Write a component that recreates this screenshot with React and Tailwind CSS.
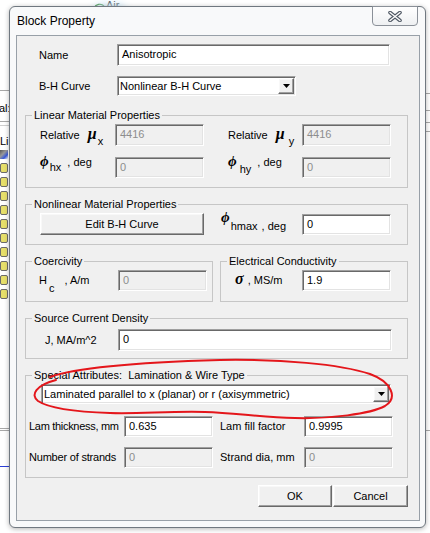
import React from 'react';

const ui = "font-['Liberation_Sans',Arial,sans-serif]";
const greek = "font-['Liberation_Serif','DejaVu_Serif',serif] font-bold italic leading-[0]";

// classic 3D edges
const sunken =
  'border border-t-[#a0a0a0] border-l-[#a0a0a0] border-r-white border-b-white shadow-[inset_1px_1px_0_#696969,inset_-1px_-1px_0_#e3e3e3]';
const raised =
  'border border-t-white border-l-white border-r-[#696969] border-b-[#696969] shadow-[inset_-1px_-1px_0_#a0a0a0,inset_1px_1px_0_#f8f8f8]';

function Field({ value, disabled, className }) {
  return (
    <div
      className={`${className} ${sunken} ${
        disabled ? 'bg-[#f0f0f0] text-[#8d8d8d]' : 'bg-white text-black'
      } pl-[4px] pt-[3px] text-[11px] leading-[13px]`}
    >
      {value}
    </div>
  );
}

function Combo({ value, className }) {
  return (
    <div className={`${className} ${sunken} bg-white flex items-center`}>
      <span className="flex-1 pl-[2px] text-[11px] leading-[13px] whitespace-nowrap">{value}</span>
      <div className={`w-[16px] h-[16px] mr-px ${raised} bg-[#f0f0f0] flex items-center justify-center`}>
        <svg width="7" height="4" viewBox="0 0 7 4">
          <path d="M0 0h7L3.5 4z" fill="#000" />
        </svg>
      </div>
    </div>
  );
}

function Button({ label, className }) {
  return (
    <div
      className={`${className} ${raised} bg-[#f0f0f0] flex items-center justify-center text-[11px] leading-[13px]`}
    >
      {label}
    </div>
  );
}

function Group({ title, className, children }) {
  return (
    <div className={`relative border border-[#c6c6c6] ${className}`}>
      <span className="absolute left-[6px] top-[-8px] bg-[#f0f0f0] px-[2px] text-[11px] leading-[14px] whitespace-pre">
        {title}
      </span>
      {children}
    </div>
  );
}

function Label({ className, children }) {
  return <div className={`${className} shrink-0 text-[11px] leading-[13px] whitespace-nowrap`}>{children}</div>;
}

function TreeIcon() {
  return <div className="w-[8px] h-[10px] rounded-[2px] border border-[#6b6b6b] bg-[#e6df6a]" />;
}

export default function App() {
  return (
    <div className={`${ui} relative w-[430px] h-[533px] overflow-hidden bg-white text-black`}>
      {/* desktop behind the dialog */}
      <div className="absolute left-[93px] top-[-3px] flex items-center gap-px text-[11px] text-[#333]">
        <svg width="12" height="8" viewBox="0 0 12 8">
          <path d="M1 7C3 3 8 2 11 5" stroke="#2f8a2f" strokeWidth="1.2" fill="none" />
        </svg>
        <span>Air</span>
      </div>
      <div className="absolute left-[95px] top-[4px] w-[30px] h-[12px] rounded-full bg-[#cfe8f5] blur-[4px]" />

      <div className="absolute left-0 top-[90px] w-[9px] flex flex-col text-[11px]">
        <div className="h-px bg-[#a8a8a8]" />
        <div className="mt-[11px] leading-[13px] -ml-px">al:</div>
        <div className="mt-[6px] h-px bg-[#a8a8a8]" />
        <div className="mt-[3px] h-px bg-[#cfcfcf]" />
        <div className="mt-[9px] leading-[12px]">Li</div>
        <div className="mt-[3px] w-[8px] h-[9px] bg-[linear-gradient(135deg,#555_0%,#999_40%,#3a5bd9_70%,#fff_100%)]" />
        <div className="mt-[4px] flex flex-col gap-[4px]">
          {Array.from({ length: 10 }).map((_, i) => (
            <TreeIcon key={i} />
          ))}
        </div>
      </div>
      <div className="absolute left-0 top-[428px] w-[9px] h-[3px] border-y border-[#a8a8a8]" />
      <div className="absolute left-0 top-[466px] w-[9px] h-px bg-[#2b3fd6]" />

      <div className="absolute left-[426px] top-[93px] w-[4px] h-px bg-[#a8a8a8]" />
      <div className="absolute left-[426px] top-[110px] w-[4px] h-px bg-[#a8a8a8]" />
      <div className="absolute left-[426px] top-[122px] w-[4px] h-px bg-[#a8a8a8]" />
      <div className="absolute left-[426px] top-[131px] w-[4px] h-px bg-[#a8a8a8]" />
      <div className="absolute left-[426px] top-[430px] w-[4px] h-px bg-[#a8a8a8]" />

      {/* Block Property dialog */}
      <div className="absolute left-[9px] top-[6px] w-[417px] h-[522px] rounded-[6px] border border-[#707880] bg-[#f8f9fa] shadow-[0_1px_5px_rgba(0,0,0,0.3)]">
        <div className="flex h-[28px]">
          <div className="pl-[7px] pt-[7px] text-[12px] leading-[14px]">Block Property</div>
          <div className="ml-auto mr-[7px] -mt-px w-[46px] h-[20px] rounded-b-[4px] border border-[#8a9098] bg-[linear-gradient(#ffffff,#eef0f2)] flex items-center justify-center">
            <svg width="16" height="11" viewBox="0 0 16 11">
              <path d="M3 1.5L13 9.5M13 1.5L3 9.5" stroke="#4f5864" strokeWidth="3.6" strokeLinecap="round" />
              <path d="M3 1.5L13 9.5M13 1.5L3 9.5" stroke="#fdfdfd" strokeWidth="1.4" strokeLinecap="round" />
            </svg>
          </div>
        </div>

        <div className="ml-[6px] w-[404px] h-[486px] border border-[#98a0a8] bg-[#f0f0f0] pt-[8px]">
          <div className="flex items-center">
            <Label className="w-[100px] pl-[22px]">Name</Label>
            <Field className="w-[273px] h-[22px]" value="Anisotropic" />
          </div>
          <div className="mt-[10px] flex items-center">
            <Label className="w-[100px] pl-[22px]">B-H Curve</Label>
            <Combo className="w-[179px] h-[20px]" value="Nonlinear B-H Curve" />
          </div>

          <Group title="Linear Material Properties" className="mt-[19px] ml-[8px] w-[383px] h-[73px] pt-[8px] pl-[14px]">
            <div className="flex items-center">
              <Label className="w-[75px]">
                Relative<span className={`${greek} ml-[8px] text-[16px]`}>μ</span>
                <span className="leading-[0] align-[-6px] ml-px">x</span>
              </Label>
              <Field className="w-[89px] h-[22px]" value="4416" disabled />
              <Label className="ml-[24px] w-[74px]">
                Relative<span className={`${greek} ml-[8px] text-[16px]`}>μ</span>
                <span className="leading-[0] align-[-6px] ml-[4px]">y</span>
              </Label>
              <Field className="w-[89px] h-[22px]" value="4416" disabled />
            </div>
            <div className="mt-[11px] flex items-center">
              <Label className="w-[75px]">
                <span className={`${greek} text-[15px] align-[5px]`}>ϕ</span>
                <span className="ml-px">hx</span>
                <span className="ml-[6px] leading-[0] align-[5px]">, deg</span>
              </Label>
              <Field className="w-[89px] h-[21px]" value="0" disabled />
              <Label className="ml-[24px] w-[74px]">
                <span className={`${greek} text-[15px] align-[5px]`}>ϕ</span>
                <span className="ml-[3px] leading-[0] align-[-2px]">hy</span>
                <span className="ml-[6px] leading-[0] align-[5px]">, deg</span>
              </Label>
              <Field className="w-[89px] h-[21px]" value="0" disabled />
            </div>
          </Group>

          <Group title="Nonlinear Material Properties" className="mt-[16px] ml-[8px] w-[383px] h-[41px] pt-[8px] pl-[14px]">
            <div className="flex items-center">
              <Button className="w-[164px] h-[22px]" label="Edit B-H Curve" />
              <Label className="ml-[17px] w-[81px]">
                <span className={`${greek} text-[15px] align-[6px]`}>ϕ</span>
                <span className="ml-px align-[-2px] leading-[0]">hmax</span>
                <span className="ml-[4px] align-[-2px] leading-[0]">, deg</span>
              </Label>
              <Field className="w-[89px] h-[21px]" value="0" />
            </div>
          </Group>

          <div className="mt-[16px] ml-[8px] flex gap-[7px]">
            <Group title="Coercivity" className="w-[188px] h-[41px] pt-[8px] pl-[13px]">
              <div className="flex items-center">
                <Label className="w-[79px]">
                  H<span className="ml-[2px] leading-[0] align-[-8px]">c</span>
                  <span className="ml-[10px]">, A/m</span>
                </Label>
                <Field className="w-[89px] h-[21px]" value="0" disabled />
              </div>
            </Group>
            <Group title="Electrical Conductivity" className="w-[188px] h-[41px] pt-[8px] pl-[14px]">
              <div className="flex items-center">
                <Label className="w-[67px]">
                  <span className={`${greek} text-[16px]`}>σ</span>
                  <span className="ml-[4px]">, MS/m</span>
                </Label>
                <Field className="w-[89px] h-[21px]" value="1.9" />
              </div>
            </Group>
          </div>

          <Group title="Source Current Density" className="mt-[16px] ml-[8px] w-[383px] h-[41px] pt-[10px] pl-[19px]">
            <div className="flex items-center">
              <Label className="w-[73px]">J, MA/m^2</Label>
              <Field className="w-[274px] h-[22px]" value="0" />
            </div>
          </Group>

          <Group
            title="Special Attributes:  Lamination & Wire Type"
            className="mt-[16px] ml-[8px] w-[383px] h-[103px] pt-[8px]"
          >
            <div className="pl-[15px]">
              <Combo className="w-[350px] h-[20px]" value="Laminated parallel to x (planar) or r (axisymmetric)" />
            </div>
            <div className="mt-[12px] pl-[3px] flex items-center">
              <Label className="w-[95px] tracking-[-0.3px]">Lam thickness, mm</Label>
              <Field className="w-[89px] h-[21px]" value="0.635" />
              <Label className="ml-[7px] w-[84px]">Lam fill factor</Label>
              <Field className="w-[89px] h-[21px]" value="0.9995" />
            </div>
            <div className="mt-[10px] pl-[3px] flex items-center">
              <Label className="w-[95px] tracking-[-0.2px]">Number of strands</Label>
              <Field className="w-[89px] h-[21px]" value="0" disabled />
              <Label className="ml-[7px] w-[84px]">Strand dia, mm</Label>
              <Field className="w-[89px] h-[21px]" value="0" disabled />
            </div>
          </Group>

          <div className="mt-[7px] pr-[11px] flex justify-end gap-px">
            <Button className="w-[74px] h-[22px]" label="OK" />
            <Button className="w-[75px] h-[22px]" label="Cancel" />
          </div>
        </div>
      </div>

      {/* red pen mark around the lamination combo */}
      <svg className="absolute left-0 top-0 pointer-events-none" width="430" height="533" viewBox="0 0 430 533">
        <path
          d="M50 377C80 366 150 362 220 360C280 359 340 364 370 374C392 382 398 398 385 406C370 414 330 419 295 418C260 417 235 413 205 412C170 411 140 414 110 413C80 412 50 409 38 401C30 395 36 385 56 380"
          fill="none"
          stroke="#e4161b"
          strokeWidth="2"
          strokeLinecap="round"
        />
      </svg>
    </div>
  );
}
